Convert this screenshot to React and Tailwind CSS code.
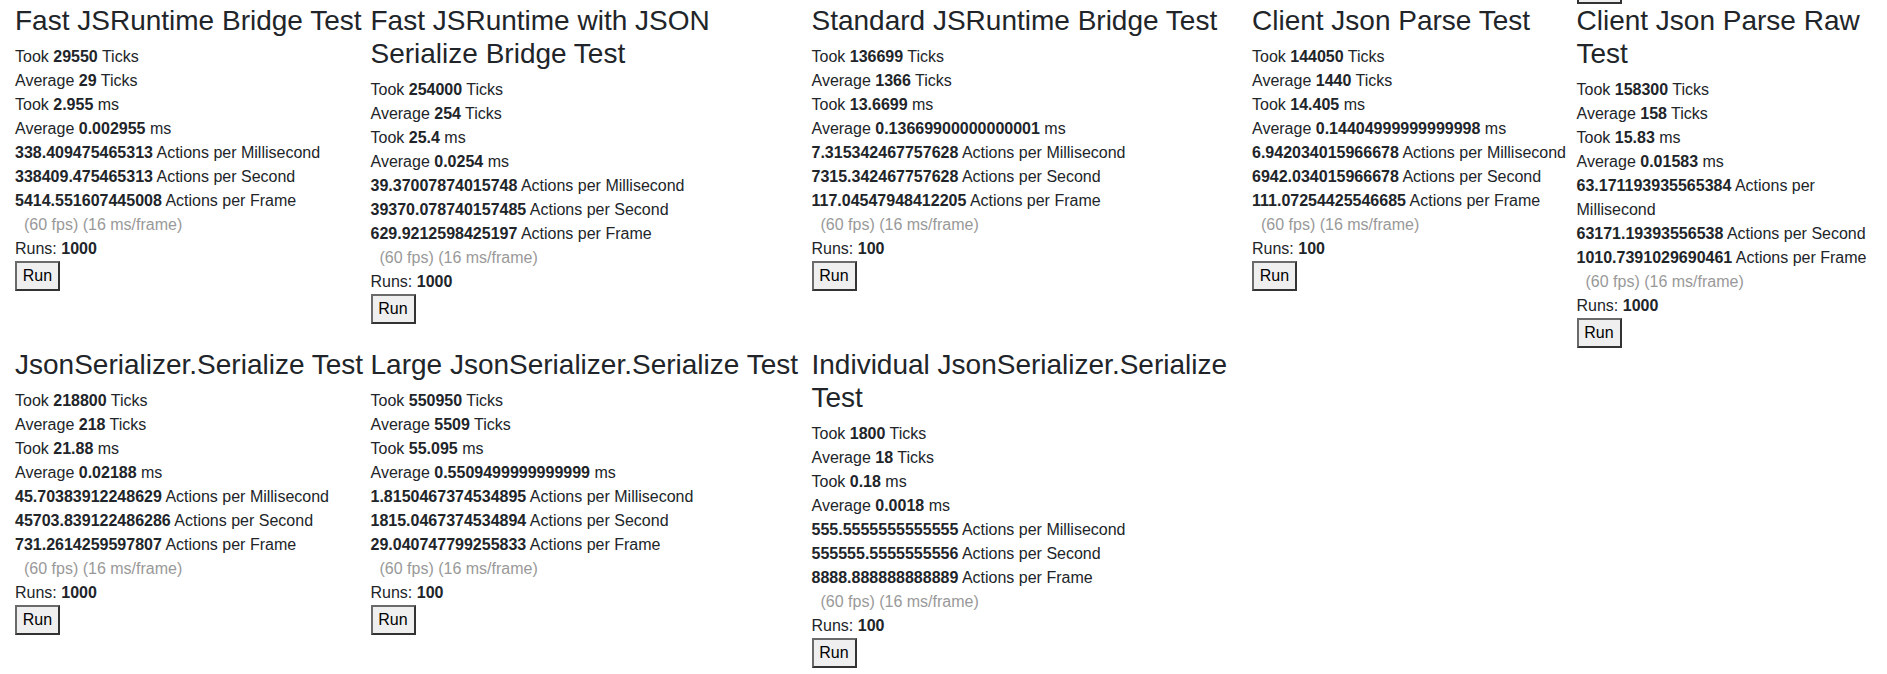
const tests = [
  {
    title: 'Fast JSRuntime Bridge Test',
    ticks: '29550', avgTicks: '29', ms: '2.955', avgMs: '0.002955',
    perMs: '338.409475465313', perSec: '338409.475465313', perFrame: '5414.551607445008', runs: '1000',
  },
  {
    title: 'Fast JSRuntime with JSON Serialize Bridge Test',
    ticks: '254000', avgTicks: '254', ms: '25.4', avgMs: '0.0254',
    perMs: '39.37007874015748', perSec: '39370.078740157485', perFrame: '629.9212598425197', runs: '1000',
  },
  {
    title: 'Standard JSRuntime Bridge Test',
    ticks: '136699', avgTicks: '1366', ms: '13.6699', avgMs: '0.13669900000000001',
    perMs: '7.315342467757628', perSec: '7315.342467757628', perFrame: '117.04547948412205', runs: '100',
  },
  {
    title: 'Client Json Parse Test',
    ticks: '144050', avgTicks: '1440', ms: '14.405', avgMs: '0.14404999999999998',
    perMs: '6.942034015966678', perSec: '6942.034015966678', perFrame: '111.07254425546685', runs: '100',
  },
  {
    title: 'Client Json Parse Raw Test',
    ticks: '158300', avgTicks: '158', ms: '15.83', avgMs: '0.01583',
    perMs: '63.171193935565384', perSec: '63171.19393556538', perFrame: '1010.7391029690461', runs: '1000',
  },
  {
    title: 'JsonSerializer.Serialize Test',
    ticks: '218800', avgTicks: '218', ms: '21.88', avgMs: '0.02188',
    perMs: '45.70383912248629', perSec: '45703.839122486286', perFrame: '731.2614259597807', runs: '1000',
  },
  {
    title: 'Large JsonSerializer.Serialize Test',
    ticks: '550950', avgTicks: '5509', ms: '55.095', avgMs: '0.5509499999999999',
    perMs: '1.8150467374534895', perSec: '1815.0467374534894', perFrame: '29.040747799255833', runs: '100',
  },
  {
    title: 'Individual JsonSerializer.Serialize Test',
    ticks: '1800', avgTicks: '18', ms: '0.18', avgMs: '0.0018',
    perMs: '555.5555555555555', perSec: '555555.5555555556', perFrame: '8888.888888888889', runs: '100',
  },
]

function RunButton() {
  return (
    <button
      type="button"
      className="h-[30px] w-[45px] bg-[#efefef] border-2 border-t-[#6a6a6a] border-l-[#6a6a6a] border-r-[#333] border-b-[#333] text-[16px] leading-none text-black"
    >
      Run
    </button>
  )
}

function TestCell({ t }) {
  return (
    <div>
      <h3 className="text-[28px] leading-[1.18] font-normal mb-2">{t.title}</h3>
      <div className="text-[16px] leading-6">
        <div>Took <b>{t.ticks}</b> Ticks</div>
        <div>Average <b>{t.avgTicks}</b> Ticks</div>
        <div>Took <b>{t.ms}</b> ms</div>
        <div>Average <b>{t.avgMs}</b> ms</div>
        <div><b>{t.perMs}</b> Actions per Millisecond</div>
        <div><b>{t.perSec}</b> Actions per Second</div>
        <div><b>{t.perFrame}</b> Actions per Frame</div>
        <div className="pl-[9px] text-[#999]">(60 fps) (16 ms/frame)</div>
        <div>Runs: <b>{t.runs}</b></div>
      </div>
      <RunButton />
    </div>
  )
}

export default function App() {
  return (
    <div
      className="min-h-screen bg-white text-[#212529] pl-[15px]"
      style={{ fontFamily: '"Liberation Sans", Arial, sans-serif' }}
    >
      <div className="grid grid-cols-[355.5px_441px_440.5px_324.5px_295px] items-start">
        {/* tail of the previous row, scrolled out of view */}
        <div className="h-[3.5px]" />
        <div className="h-[3.5px]" />
        <div className="h-[3.5px]" />
        <div className="h-[3.5px]" />
        <div className="h-[3.5px] w-[45px] bg-[#efefef] border-x-2 border-b-2 border-[#333]" />

        {tests.map((t) => (
          <TestCell key={t.title} t={t} />
        ))}
      </div>
    </div>
  )
}
